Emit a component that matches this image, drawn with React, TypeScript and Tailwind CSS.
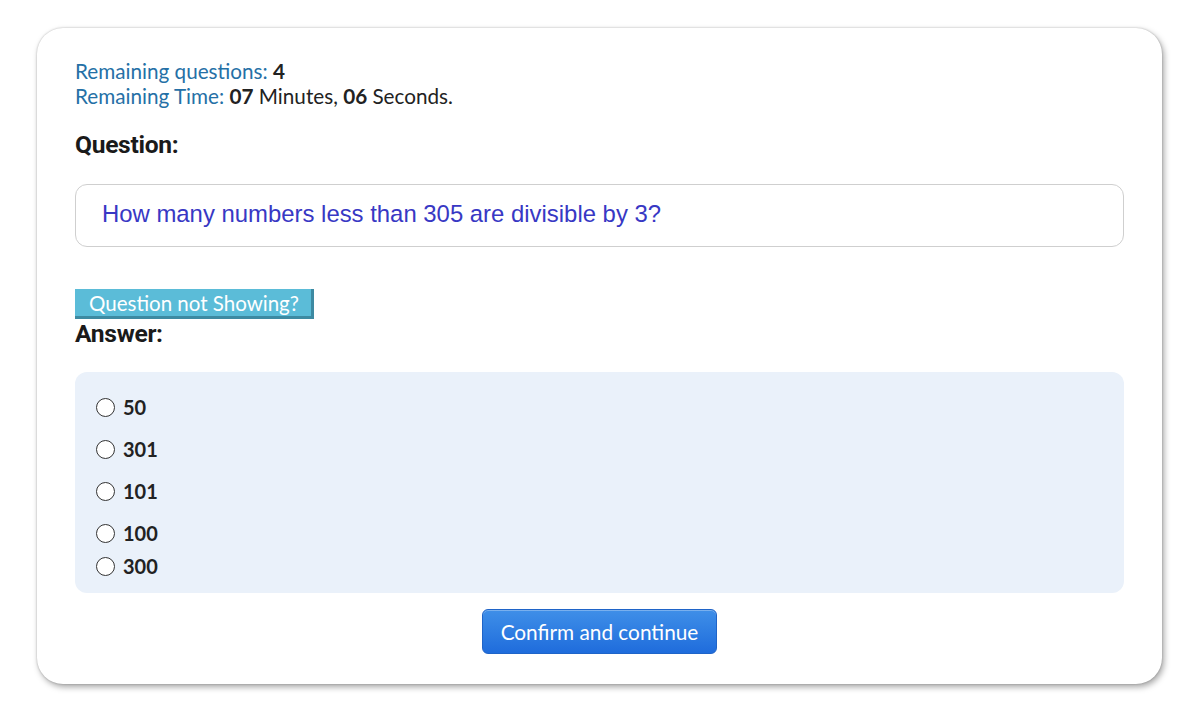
import React from 'react';

const options = ['50', '301', '101', '100', '300'];

const Radio: React.FC = () => (
  <span className="inline-block h-[19px] w-[19px] shrink-0 rounded-full border-[1.5px] border-[#333] bg-white" />
);

const App: React.FC = () => {
  return (
    <div className="min-h-[717px] w-[1200px] bg-white pt-[28px] pl-[37px] font-['Lato',sans-serif]">
      <div className="h-[656px] w-[1125px] rounded-[26px] bg-white px-[38px] pt-[31px] shadow-[2px_3px_6px_rgba(0,0,0,0.35),0_0_2px_rgba(0,0,0,0.25)]">
        <div className="text-[20.7px] leading-[25px] text-[#222]">
          <div>
            <span className="text-[#2570a6]">Remaining questions:</span> <b>4</b>
          </div>
          <div>
            <span className="text-[#2570a6]">Remaining Time:</span> <b>07</b> Minutes, <b>06</b> Seconds.
          </div>
        </div>

        <h2 className="mt-[21px] font-['Roboto',sans-serif] text-[24.6px] font-bold leading-[29px] tracking-[-0.3px] text-[#1a1a1a]">
          Question:
        </h2>

        <div className="mt-[25px] flex h-[63px] items-center rounded-[12px] border border-[#cfcfcf] px-[26px]">
          <p className="pb-[3px] font-['Liberation_Sans',sans-serif] text-[23.9px] text-[#3838c4]">
            How many numbers less than 305 are divisible by 3?
          </p>
        </div>

        <button className="mt-[42px] block h-[30px] w-[239px] border-r-[3px] border-b-[3px] border-[#3d8aa2] bg-[#5bbcd8] pt-[1px] text-left pl-[14px] text-[20.5px] leading-[25px] text-white">
          Question not Showing?
        </button>

        <h2 className="font-['Roboto',sans-serif] text-[24.6px] font-bold leading-[29px] tracking-[-0.3px] text-[#1a1a1a]">
          Answer:
        </h2>

        <div className="mt-[24px] h-[221px] rounded-[12px] bg-[#eaf1fa] pl-[21px] pt-[23px]">
          {options.map((opt, i) => (
            <label
              key={opt}
              className={`flex h-[24px] items-center gap-[8px] text-[20px] font-bold text-[#222] ${
                i === 0 ? '' : i === 4 ? 'mt-[9px]' : 'mt-[18px]'
              }`}
            >
              <Radio />
              <span>{opt}</span>
            </label>
          ))}
        </div>

        <div className="mt-[16px] flex justify-center">
          <button className="h-[45px] w-[235px] rounded-[6px] border border-[#1f64c8] bg-gradient-to-b from-[#3f8fe8] to-[#1f6cdc] text-[20.8px] text-white shadow-[inset_0_1px_0_rgba(255,255,255,0.3)]">
            Confirm and continue
          </button>
        </div>
      </div>
    </div>
  );
};

export default App;
